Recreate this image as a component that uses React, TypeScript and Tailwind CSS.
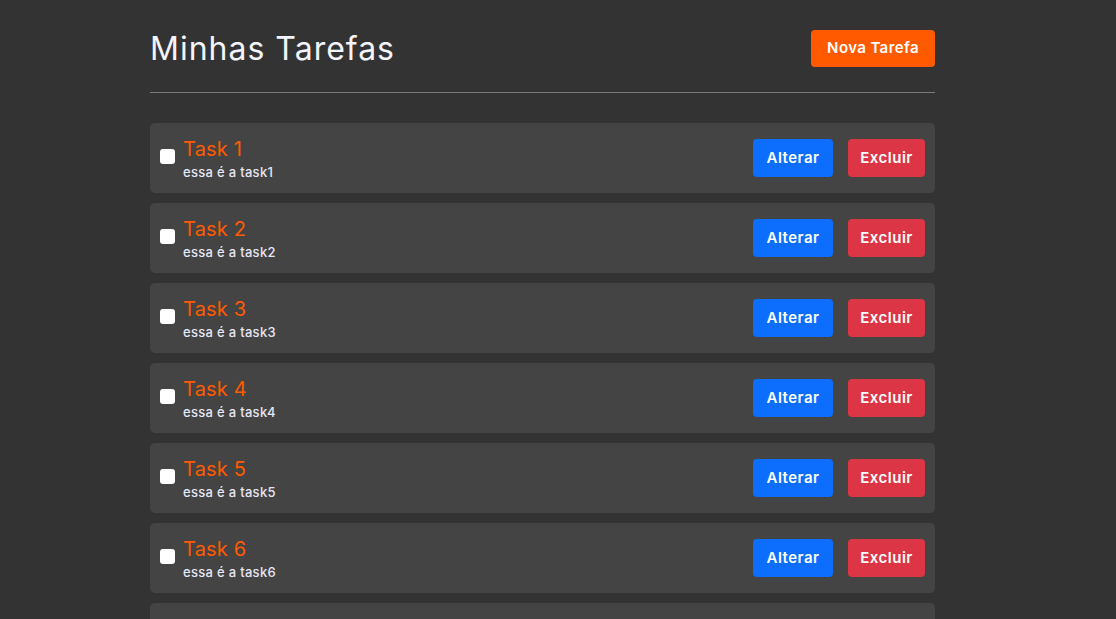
import React from "react";

const tasks = [1, 2, 3, 4, 5, 6, 7];

export default function App() {
  return (
    <div
      className="min-h-screen bg-[#333333] text-white"
      style={{ fontFamily: "Inter, 'Noto Sans', sans-serif" }}
    >
      <div className="ml-[150px] w-[785px] pt-[30px]">
        <div className="flex items-center justify-between">
          <h1 className="text-[32px] leading-[37px] font-normal text-[#f4f4fb] tracking-[1px]">
            Minhas Tarefas
          </h1>
          <button className="h-[37px] w-[124px] rounded-[4px] bg-[#ff5a00] text-[15px] font-semibold tracking-[0.4px] text-white">
            Nova Tarefa
          </button>
        </div>
        <div className="mt-[25px] h-px bg-[#7a7a7a]" />
        <div className="mt-[30px] flex flex-col gap-[10px]">
          {tasks.map((n) => (
            <div
              key={n}
              className="flex h-[70px] items-center justify-between rounded-[5px] bg-[#444444] px-[10px]"
            >
              <div className="flex items-center gap-[8px]">
                <span className="mb-[3px] block h-[15px] w-[15px] rounded-[3px] bg-white" />
                <div className="flex flex-col">
                  <span className="text-[20px] leading-[27px] text-[#ff5a00] tracking-[0.2px]">Task {n}</span>
                  <span className="text-[13px] leading-[18px] font-medium text-[#e6e6f5] tracking-[0.3px]">
                    essa é a task{n}
                  </span>
                </div>
              </div>
              <div className="flex items-center gap-[15px]">
                <button className="h-[38px] w-[80px] rounded-[4px] bg-[#0d6efd] text-[15px] font-semibold tracking-[0.5px] text-white">
                  Alterar
                </button>
                <button className="h-[38px] w-[77px] rounded-[4px] bg-[#dc3545] text-[15px] font-semibold tracking-[0.5px] text-white">
                  Excluir
                </button>
              </div>
            </div>
          ))}
        </div>
      </div>
    </div>
  );
}
